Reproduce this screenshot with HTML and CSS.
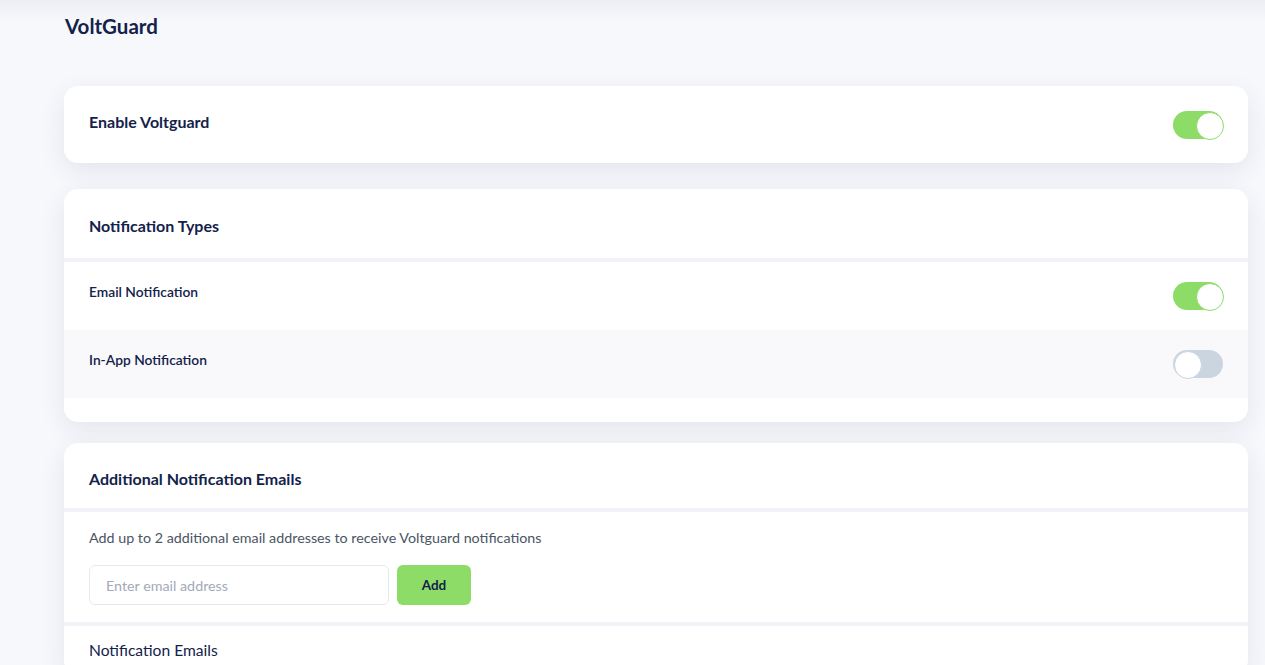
FILE: index.html
```html
<!DOCTYPE html>
<html lang="en">
  <head>
    <meta charset="UTF-8" />
    <meta name="viewport" content="width=device-width, initial-scale=1.0" />
    <title>VoltGuard</title>
    <link rel="stylesheet" href="styles.css">
  </head>
  <body>
    <main class="page">
      <h1 class="page-title">VoltGuard</h1>

      <!-- Master switch -->
      <section class="card card-single">
        <h2 class="card-title">Enable Voltguard</h2>
        <span class="toggle on"></span>
      </section>

      <!-- Notification types -->
      <section class="card card-types">
        <header class="card-head">
          <h2 class="card-title">Notification Types</h2>
        </header>
        <div class="row">
          <span class="row-label">Email Notification</span>
          <span class="toggle on"></span>
        </div>
        <div class="row row-alt">
          <span class="row-label">In-App Notification</span>
          <span class="toggle"></span>
        </div>
        <div class="card-foot"></div>
      </section>

      <!-- Extra emails -->
      <section class="card card-emails">
        <header class="card-head card-head-sm">
          <h2 class="card-title">Additional Notification Emails</h2>
        </header>
        <div class="email-body">
          <p class="hint">Add up to 2 additional email addresses to receive Voltguard notifications</p>
          <form class="email-form">
            <input class="email-input" type="email" placeholder="Enter email address" />
            <button class="btn-add" type="button">Add</button>
          </form>
        </div>
        <div class="email-list">
          <h3 class="list-title">Notification Emails</h3>
        </div>
      </section>
    </main>
  </body>
</html>
```

FILE: styles.css
```css
* {
  margin: 0;
  padding: 0;
  box-sizing: border-box;
}

html,
body {
  width: 100%;
  min-height: 100%;
}

body {
  font-family: "Lato", "Open Sans", sans-serif;
  color: #13224a;
  background: linear-gradient(#eceef4 0, #f7f8fc 22px) #f7f8fc;
  overflow: hidden;
}

.page {
  padding: 12px 17px 40px 64px;
  display: flex;
  flex-direction: column;
}

.page-title {
  font-size: 20.5px;
  font-weight: 700;
  line-height: 28px;
  padding-left: 1px;
  margin-bottom: 46px;
}

.card {
  background: #fff;
  border-radius: 14px;
  box-shadow: 0 8px 26px rgba(30, 40, 90, 0.09);
  overflow: hidden;
}

.card-types {
  margin-top: 26px;
}

.card-emails {
  margin-top: 21px;
}

.card-single {
  height: 77px;
  display: flex;
  align-items: center;
  justify-content: space-between;
  padding: 0 25px;
}

.card-single .card-title {
  margin-bottom: 6px;
}

.card-title {
  font-size: 16px;
  font-weight: 700;
}

.card-head {
  height: 73px;
  display: flex;
  align-items: center;
  padding: 4px 25px 0;
  border-bottom: 4px solid #f2f3f8;
}

.card-head-sm {
  height: 69px;
  padding-top: 5px;
}

.row {
  height: 68px;
  display: flex;
  align-items: center;
  justify-content: space-between;
  padding: 0 25px;
}

.row-alt {
  background: #f9f9fc;
}

.row-label {
  font-size: 13.8px;
  font-weight: 600;
  margin-bottom: 9px;
}

.card-foot {
  height: 24px;
}

/* Switches */
.toggle {
  position: relative;
  width: 50px;
  height: 28px;
  border-radius: 14px;
  background: #cbd5e0;
  flex-shrink: 0;
}
.toggle::after {
  content: "";
  position: absolute;
  top: 1px;
  left: 1px;
  width: 26px;
  height: 26px;
  border-radius: 50%;
  background: #fff;
  border: 1.5px solid #cbd5e0;
}
.toggle.on {
  background: #8ddc68;
}
.toggle.on::after {
  left: 23px;
  border-color: #8ddc68;
}

/* Emails */
.email-body {
  padding: 16px 25px 17px;
  border-bottom: 4px solid #f2f3f8;
}

.hint {
  font-size: 14.3px;
  color: #4b5565;
  line-height: 20px;
  margin-bottom: 17px;
}

.email-form {
  display: flex;
  gap: 8px;
}

.email-input {
  width: 300px;
  height: 40px;
  border: 1px solid #e6e8f0;
  border-radius: 6px;
  padding: 0 16px;
  font-family: inherit;
  font-size: 14.3px;
  color: #13224a;
  outline: none;
}
.email-input::placeholder {
  color: #a3aab9;
}

.btn-add {
  width: 74px;
  height: 40px;
  border: none;
  border-radius: 6px;
  background: #8ddc68;
  font-family: inherit;
  font-size: 13.5px;
  font-weight: 700;
  color: #13224a;
}

.email-list {
  padding: 15px 25px;
}

.list-title {
  font-size: 15.6px;
  font-weight: 400;
}
```
